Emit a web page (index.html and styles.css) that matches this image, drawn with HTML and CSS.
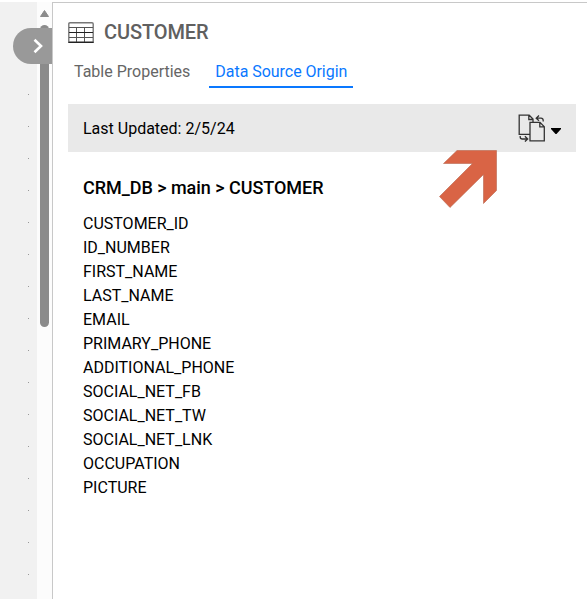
FILE: index.html
```html
<!DOCTYPE html>
<html lang="en">
<head>
<meta charset="utf-8">
<title>Customer</title>
<link rel="stylesheet" href="styles.css">
</head>
<body>
<div class="app">
  <div class="canvas"></div>
  <div class="scrollbar">
    <svg class="scroll-up" width="9" height="7" viewBox="0 0 9 7"><path d="M4.5 .5 8.5 6.5H.5Z" fill="#8b8b8b" stroke="#8b8b8b" stroke-linejoin="round"/></svg>
    <div class="thumb"></div>
  </div>
  <main class="panel">
    <header class="title">
      <svg width="26" height="21" viewBox="0 0 26 21" fill="none" stroke="#555"><path d="M.8 20.3V2Q.8.8 2 .8H24Q25.2.8 25.2 2V20.3Z" stroke="#777" stroke-width="1.4"/><path d="M1 5.5H25M1 15.5H25M8.5 6V20M16.5 6V20"/><path d="M1 10.5H25M.5 20.4H25.5" stroke="#222" stroke-width="1.1"/></svg>
      <h1>CUSTOMER</h1>
    </header>
    <nav class="tabs">
      <a class="tab">Table Properties</a>
      <a class="tab active">Data Source Origin</a>
    </nav>
    <div class="toolbar">
      <span class="updated">Last Updated: 2/5/24</span>
      <div class="sync">
        <svg width="28" height="28" viewBox="0 0 28 28" fill="none" stroke="#333" stroke-width="1.3"><path d="M11.5 20.4H1.2V1.2H11.2L15 5V8M10.8 1.2V5.5H15M12 8.4H22L26.3 12.7V26.8H12ZM21.8 8.4V12.9H26.3"/><path d="M25.2 7.5V6.4Q25.2 4.2 23 4.2H18.4M21 1.5 18.2 4.2 21 6.8M2.2 22V23Q2.2 25 4.4 25H9.5M6.9 22.3 9.7 25 6.9 27.6"/></svg>
        <svg class="caret" width="10" height="6" viewBox="0 0 10 6"><path d="M0 0H10V1L5.5 6H4.5L0 1Z"/></svg>
      </div>
    </div>
    <section class="source">
      <h2>CRM_DB &gt; main &gt; CUSTOMER</h2>
      <ul>
        <li>CUSTOMER_ID</li>
        <li>ID_NUMBER</li>
        <li>FIRST_NAME</li>
        <li>LAST_NAME</li>
        <li>EMAIL</li>
        <li>PRIMARY_PHONE</li>
        <li>ADDITIONAL_PHONE</li>
        <li>SOCIAL_NET_FB</li>
        <li>SOCIAL_NET_TW</li>
        <li>SOCIAL_NET_LNK</li>
        <li>OCCUPATION</li>
        <li>PICTURE</li>
      </ul>
    </section>
  </main>
  <div class="collapse"><svg width="10" height="16" viewBox="0 0 10 16"><path d="M1.5 1.8 8 8 1.5 14.2" fill="none" stroke="#fff" stroke-width="2.6"/></svg></div>
  <svg class="pointer" width="58" height="58" viewBox="0 0 58 58"><path d="M18 .5H57.5V40.5L44.5 53.5V24.5L11 57.5.5 46.5 33.5 13.5H4.5Z" fill="#d96445" stroke="#b9674f" stroke-width=".6"/></svg>
</div>
</body>
</html>
```
FILE: styles.css
```css
* { box-sizing: border-box; }
body { margin: 0; background: #fff; font: 400 16px/24px Roboto, sans-serif; color: #000; overflow: hidden; }
svg { display: block; flex: none; }
.app { position: relative; display: flex; height: 599px; padding-top: 2px; }
.canvas {
  width: 37px;
  background: conic-gradient(from 0deg at 1px 1px, transparent 75%, #999 0) 28px 28px / 32px 32px #f1f1f1;
}
.scrollbar { width: 15px; padding: 8px 3px 0; background: #fcfcfc; }
.thumb { width: 9px; height: 302px; margin-top: 8px; border-radius: 5px; background: #8b8b8b; }
.panel { flex: 1; border: solid #c8c8c8; border-width: 1px 0 0 1px; background: #fff; padding: 17px 11px 0 15px; }
.title { display: flex; align-items: center; gap: 10px; height: 24px; }
h1 { margin: 0; font-size: 20px; line-height: 24px; font-weight: 500; letter-spacing: -.1px; color: #606060; }
.tabs { display: flex; gap: 13px; margin-top: 16px; }
.tab { height: 28px; padding: 0 6px; color: #666; border-bottom: 2px solid transparent; }
.tab.active { letter-spacing: -.04px; color: #0a78ff; border-color: #0a78ff; }
.toolbar { display: flex; align-items: center; justify-content: space-between; height: 48px; margin-top: 16px; padding: 0 15px; background: #e9e9e9; }
.updated { padding-top: 2px; }
.sync { display: flex; align-items: center; gap: 5px; }
.caret { margin-top: 5px; }
.source { padding: 24px 15px 0; }
h2 { margin: 0 0 12px; font-size: 18px; line-height: 24px; font-weight: 500; letter-spacing: -.04px; }
ul { list-style: none; margin: 0; padding: 0; }
.collapse { position: absolute; left: 13px; top: 28px; width: 39px; height: 36px; padding: 10px 0 0 20px; border-radius: 18px 0 0 18px; background: #999; }
.pointer { position: absolute; left: 439px; top: 150px; }
```
